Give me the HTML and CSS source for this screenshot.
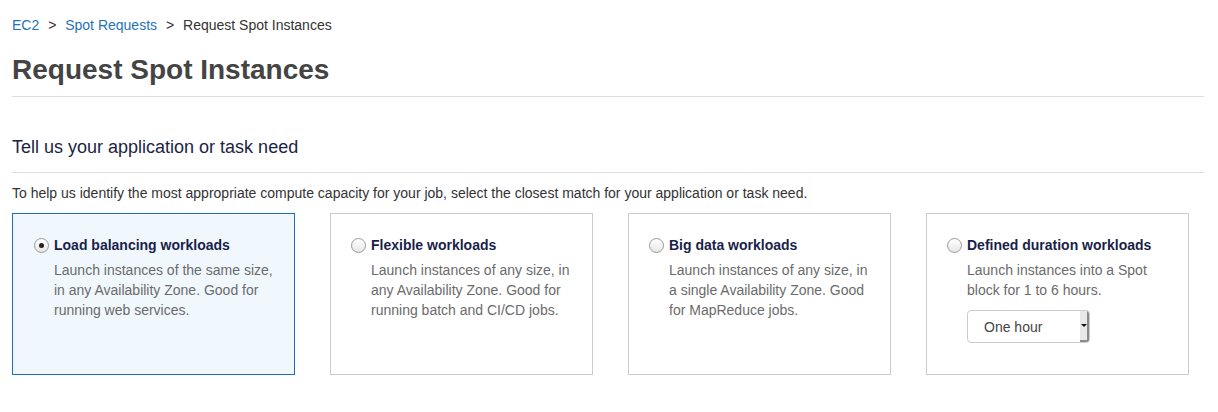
FILE: index.html
```html
<!DOCTYPE html>
<html>
<head>
<meta charset="utf-8">
<link rel="stylesheet" href="styles.css">
</head>
<body>
<div class="page">
  <nav class="crumbs">
    <a href="#" class="crumb-link">EC2</a>
    <span class="sep">&gt;</span>
    <a href="#" class="crumb-link">Spot Requests</a>
    <span class="sep">&gt;</span>
    <span class="crumb-current">Request Spot Instances</span>
  </nav>
  <h1 class="title">Request Spot Instances</h1>
  <div class="rule"></div>
  <h2 class="section-title">Tell us your application or task need</h2>
  <div class="rule rule-2"></div>
  <p class="intro">To help us identify the most appropriate compute capacity for your job, select the closest match for your application or task need.</p>
  <div class="cards">
    <div class="card card-selected card-wide">
      <div class="card-head"><span class="radio radio-on"></span><span class="card-title">Load balancing workloads</span></div>
      <p class="card-desc">Launch instances of the same size, in any Availability Zone. Good for running web services.</p>
    </div>
    <div class="card">
      <div class="card-head"><span class="radio"></span><span class="card-title">Flexible workloads</span></div>
      <p class="card-desc">Launch instances of any size, in any Availability Zone. Good for running batch and CI/CD jobs.</p>
    </div>
    <div class="card">
      <div class="card-head"><span class="radio"></span><span class="card-title">Big data workloads</span></div>
      <p class="card-desc">Launch instances of any size, in a single Availability Zone. Good for MapReduce jobs.</p>
    </div>
    <div class="card">
      <div class="card-head"><span class="radio"></span><span class="card-title">Defined duration workloads</span></div>
      <p class="card-desc">Launch instances into a Spot block for 1 to 6 hours.</p>
      <div class="select">
        <span class="select-label">One hour</span>
        <span class="select-arrow"></span>
      </div>
    </div>
  </div>
</div>
</body>
</html>
```
FILE: styles.css
```css
html, body {
  margin: 0;
  padding: 0;
  background: #ffffff;
}
body {
  font-family: "Liberation Sans", Arial, sans-serif;
  color: #333;
}
.page {
  padding: 15px 14px 0 12px;
}
.crumbs {
  font-size: 14px;
  line-height: 20px;
  color: #333;
}
.crumb-link {
  color: #1f73b7;
  text-decoration: none;
}
.sep {
  margin: 0 5px;
  color: #333;
}
.crumb-current {
  color: #333;
}
.title {
  margin: 19px 0 0 0;
  font-size: 28px;
  line-height: 32px;
  font-weight: bold;
  color: #444444;
}
.rule {
  height: 1px;
  background: #dddddd;
  margin-top: 10px;
}
.section-title {
  margin: 38px 0 0 0;
  font-size: 18px;
  line-height: 24px;
  font-weight: normal;
  color: #1c2444;
}
.rule-2 {
  margin-top: 13px;
}
.intro {
  margin: 10px 0 0 0;
  font-size: 14px;
  line-height: 20px;
  color: #333;
}
.cards {
  display: flex;
  gap: 35px;
  margin-top: 10px;
}
.card {
  box-sizing: border-box;
  width: 263px;
  height: 162px;
  border: 1px solid #cccccc;
  padding: 22px 20px 0 20px;
  background: #fff;
}
.card-wide {
  width: 283px;
}
.card-selected {
  border-color: #1a6fbf;
  background: #f0f8fe;
  padding-left: 21px;
}
.card-head {
  display: flex;
  align-items: center;
  height: 18px;
}
.radio {
  box-sizing: border-box;
  width: 15px;
  height: 15px;
  border-radius: 50%;
  border: 1px solid #9a9a9a;
  background: linear-gradient(#ffffff, #e6e6e6);
  margin-right: 5px;
  flex: none;
  position: relative;
}
.radio-on::after {
  content: "";
  position: absolute;
  left: 4px;
  top: 4px;
  width: 5px;
  height: 5px;
  border-radius: 50%;
  background: #222;
}
.card-title {
  font-size: 14px;
  font-weight: bold;
  color: #1a1f4a;
}
.card-desc {
  margin: 6px 0 0 20px;
  font-size: 14px;
  line-height: 20px;
  color: #6b6b6b;
}
.select {
  box-sizing: border-box;
  margin: 10px 0 0 20px;
  width: 123px;
  height: 33px;
  border: 1px solid #cccccc;
  border-radius: 4px;
  display: flex;
  align-items: center;
  overflow: hidden;
  background: #fff;
}
.select-label {
  flex: 1;
  padding-left: 16px;
  font-size: 14px;
  color: #444;
}
.select-arrow {
  width: 9px;
  height: 100%;
  background: #e8e8e8;
  border-right: 2px solid #8a8a8a;
  border-bottom: 2px solid #8a8a8a;
  box-sizing: border-box;
  position: relative;
}
.select-arrow::after {
  content: "";
  position: absolute;
  left: 1px;
  top: 13px;
  border-left: 3px solid transparent;
  border-right: 3px solid transparent;
  border-top: 3px solid #111;
}
```
